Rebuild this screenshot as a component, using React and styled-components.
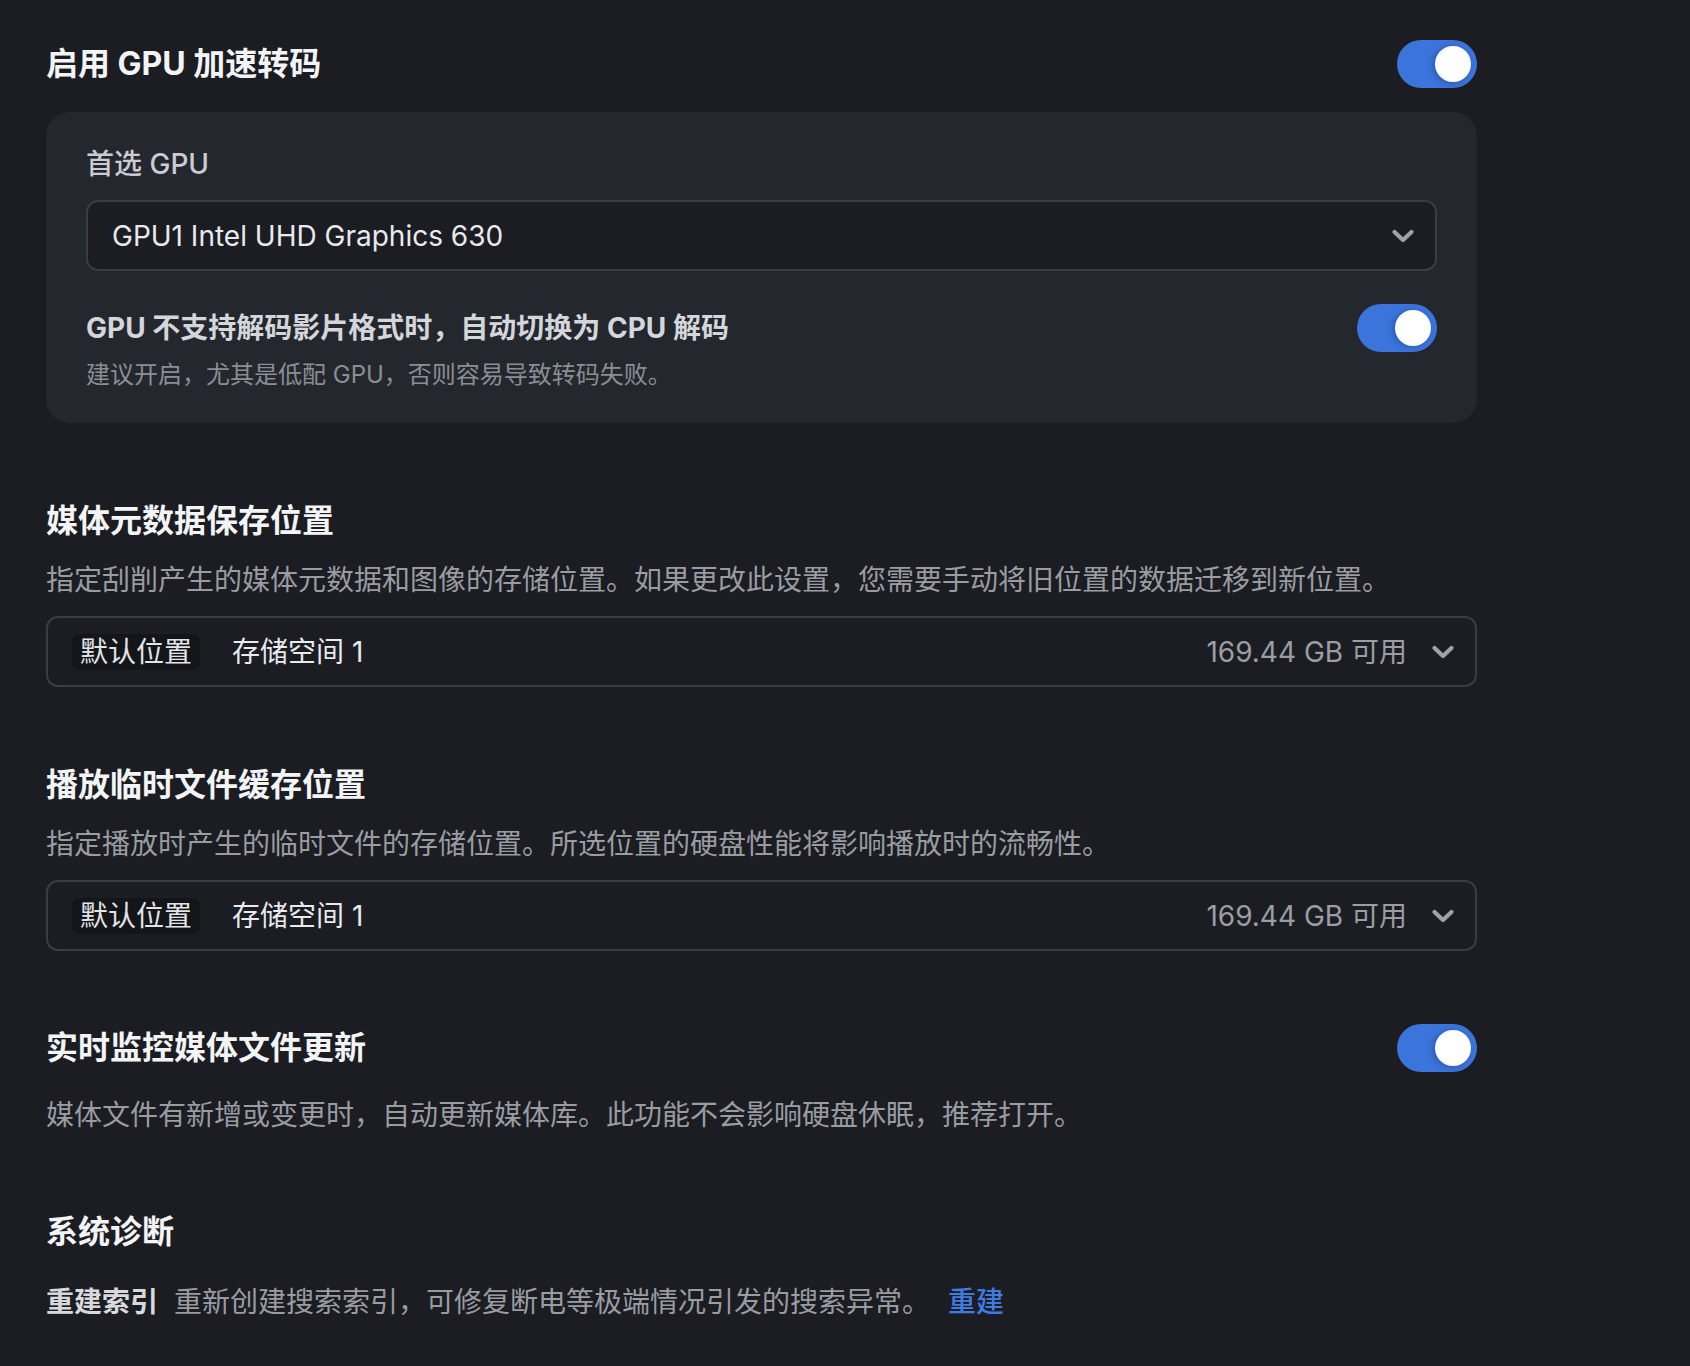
import React, { useState } from 'react';
import styled, { createGlobalStyle } from 'styled-components';

const GlobalStyle = createGlobalStyle`
  html, body {
    margin: 0;
    padding: 0;
    background: #1b1d22;
  }
  body {
    font-family: Inter, "Noto Sans CJK SC", "Noto Sans", sans-serif;
    color: #f1f2f4;
    -webkit-font-smoothing: antialiased;
  }
`

const Page = styled.div`
  min-height: 1366px;
  box-sizing: border-box;
  padding: 40px 0 40px 46px;
  background: #1b1d22;
`

const Column = styled.div`
  width: 1431px;
  display: flex;
  flex-direction: column;
`

const Section = styled.section`
  display: flex;
  flex-direction: column;
  margin-top: ${p => p.$top || 0}px;
`

const TitleRow = styled.div`
  display: flex;
  align-items: center;
  justify-content: space-between;
  height: 48px;
`

const Title = styled.h2`
  margin: 0;
  font-size: 32px;
  line-height: 44px;
  font-weight: 700;
  color: #f3f4f6;
`

const Desc = styled.p`
  margin: ${p => p.$top || 17}px 0 0;
  font-size: 28px;
  line-height: 40px;
  font-weight: 400;
  color: #9a9ca2;
`

const Card = styled.div`
  margin-top: 24px;
  background: #24272d;
  border-radius: 24px;
  padding: 32px 40px 31px;
  display: flex;
  flex-direction: column;
`

const Label = styled.div`
  font-size: 28px;
  line-height: 40px;
  font-weight: 500;
  color: #c9ccd2;
`

const SelectBox = styled.div`
  margin-top: ${p => p.$top || 16}px;
  height: 71px;
  box-sizing: border-box;
  border: 2px solid #3a3d44;
  border-radius: 12px;
  background: #1b1d22;
  display: flex;
  align-items: center;
  padding: 0 20px 0 24px;
  gap: 32px;
`

const SelectValue = styled.span`
  font-size: 28px;
  line-height: 36px;
  color: #e8eaed;
  flex: 1;
  white-space: nowrap;
`

const Tag = styled.span`
  font-size: 28px;
  line-height: 36px;
  padding: 0 8px;
  border-radius: 8px;
  background: #131519;
  color: #e2e4e8;
`

const Avail = styled.span`
  font-size: 28px;
  line-height: 36px;
  color: #9b9ea4;
  margin-right: -8px;
`

const SubRow = styled.div`
  margin-top: 33px;
  display: flex;
  align-items: flex-start;
  justify-content: space-between;
`

const SubText = styled.div`
  display: flex;
  flex-direction: column;
`

const SubTitle = styled.div`
  font-size: 28px;
  line-height: 48px;
  font-weight: 700;
  color: #d3d6db;
`

const Hint = styled.div`
  margin-top: 6px;
  font-size: 24px;
  line-height: 34px;
  color: #8b8e94;
`

const SwitchTrack = styled.button`
  flex: none;
  width: 80px;
  height: 48px;
  border: none;
  border-radius: 24px;
  padding: 6px;
  cursor: pointer;
  background: ${p => (p.$on ? '#3b74db' : '#4a4d55')};
  display: flex;
  justify-content: ${p => (p.$on ? 'flex-end' : 'flex-start')};
`

const SwitchKnob = styled.span`
  width: 36px;
  height: 36px;
  border-radius: 50%;
  background: #ffffff;
  box-shadow: -2px 1px 6px rgba(20, 40, 90, 0.35);
`

const DiagRow = styled.div`
  margin-top: 28px;
  display: flex;
  align-items: center;
  font-size: 28px;
  line-height: 40px;
`

const DiagName = styled.span`
  font-weight: 700;
  color: #d7d9dd;
  margin-right: 16px;
`

const DiagDesc = styled.span`
  color: #9a9ca2;
`

const LinkBtn = styled.a`
  margin-left: 18px;
  color: #3f7be0;
  cursor: pointer;
  font-weight: 500;
`

const Chevron = () => (
  <svg width="24" height="16" viewBox="0 0 24 16" style={{ flex: 'none' }}>
    <polyline points="3.5,4 12,12 20.5,4" fill="none" stroke="#9fa2a8" strokeWidth="4.2" strokeLinecap="round" strokeLinejoin="round" />
  </svg>
);

const Switch = ({ on, onChange }) => (
  <SwitchTrack $on={on} onClick={() => onChange(!on)}>
    <SwitchKnob />
  </SwitchTrack>
);

const StorageSelect = ({ top }) => (
  <SelectBox $top={top}>
    <Tag>默认位置</Tag>
    <SelectValue>存储空间 1</SelectValue>
    <Avail>169.44 GB 可用</Avail>
    <Chevron />
  </SelectBox>
);

const App = () => {
  const [gpu, setGpu] = useState(true);
  const [fallback, setFallback] = useState(true);
  const [watch, setWatch] = useState(true);

  return (
    <Page>
      <GlobalStyle />
      <Column>
        <Section>
          <TitleRow>
            <Title>启用 GPU 加速转码</Title>
            <Switch on={gpu} onChange={setGpu} />
          </TitleRow>
          <Card>
            <Label>首选 GPU</Label>
            <SelectBox $top={16}>
              <SelectValue>GPU1 Intel UHD Graphics 630</SelectValue>
              <Chevron />
            </SelectBox>
            <SubRow>
              <SubText>
                <SubTitle>GPU 不支持解码影片格式时，自动切换为 CPU 解码</SubTitle>
                <Hint>建议开启，尤其是低配 GPU，否则容易导致转码失败。</Hint>
              </SubText>
              <Switch on={fallback} onChange={setFallback} />
            </SubRow>
          </Card>
        </Section>

        <Section $top={76}>
          <Title>媒体元数据保存位置</Title>
          <Desc>指定刮削产生的媒体元数据和图像的存储位置。如果更改此设置，您需要手动将旧位置的数据迁移到新位置。</Desc>
          <StorageSelect />
        </Section>

        <Section $top={76}>
          <Title>播放临时文件缓存位置</Title>
          <Desc>指定播放时产生的临时文件的存储位置。所选位置的硬盘性能将影响播放时的流畅性。</Desc>
          <StorageSelect />
        </Section>

        <Section $top={73}>
          <TitleRow>
            <Title>实时监控媒体文件更新</Title>
            <Switch on={watch} onChange={setWatch} />
          </TitleRow>
          <Desc $top={23}>媒体文件有新增或变更时，自动更新媒体库。此功能不会影响硬盘休眠，推荐打开。</Desc>
        </Section>

        <Section $top={75}>
          <Title>系统诊断</Title>
          <DiagRow>
            <DiagName>重建索引</DiagName>
            <DiagDesc>重新创建搜索索引，可修复断电等极端情况引发的搜索异常。</DiagDesc>
            <LinkBtn>重建</LinkBtn>
          </DiagRow>
        </Section>
      </Column>
    </Page>
  );
};

export default App;
